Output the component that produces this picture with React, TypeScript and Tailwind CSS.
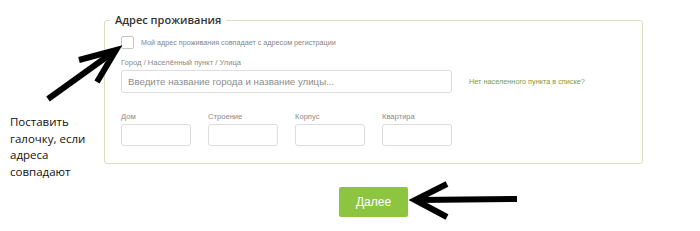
import React from 'react'

const SANS = { fontFamily: '"Liberation Sans", Arial, sans-serif' }

function Field({ label, className }: { label: string; className: string }) {
  return (
    <div className={className}>
      <div className="text-[7.6px] leading-[10px] text-[#8a8a8a]">{label}</div>
      <input type="text" className="mt-[2px] h-[22px] w-full rounded-[3px] border border-[#dddddd] bg-white outline-none" />
    </div>
  )
}

export default function App() {
  return (
    <div className="relative flex h-[231px] w-[700px] overflow-hidden bg-white" style={SANS}>
      {/* Annotation */}
      <div
        className="w-[104px] shrink-0 pl-[10px] pt-[114px] text-[11.5px] leading-[16.7px] text-[#111]"
        style={{ fontFamily: '"Open Sans", "Noto Sans", sans-serif' }}
      >
        Поставить
        <br />
        галочку, если
        <br />
        адреса
        <br />
        совпадают
      </div>

      {/* Form */}
      <div className="flex w-[539px] shrink-0 flex-col items-center pt-[11px]">
        <fieldset className="w-full rounded-[3px] border border-[#dcdfbf] px-[16px] pb-[16px]">
          <legend
            className="ml-[-11px] px-[5px] text-[11px] leading-[18px] font-semibold text-[#333]"
            style={{ fontFamily: '"Open Sans", "Noto Sans", sans-serif' }}
          >
            Адрес проживания
          </legend>

          <label className="mt-[7px] flex items-center gap-[7px]">
            <input
              type="checkbox"
              className="h-[13px] w-[13px] appearance-none rounded-[2px] border border-[#c4c4c4] bg-white"
            />
            <span className="text-[7.2px] leading-[13px] text-[#858585]">
              Мой адрес проживания совпадает с адресом регистрации
            </span>
          </label>

          <div className="mt-[9px] text-[7.6px] leading-[10px] text-[#8a8a8a]">Город / Населённый пункт / Улица</div>
          <div className="mt-[2px] flex items-center">
            <input
              type="text"
              placeholder="Введите название города и название улицы..."
              className="h-[23px] w-[331px] rounded-[3px] border border-[#dddddd] bg-white px-[6px] text-[9.7px] text-[#555] outline-none placeholder:text-[#8c8c8c]"
            />
            <a className="ml-[17px] mt-[2px] text-[7.3px] text-[#7d9b4b]">Нет населенного пункта в списке?</a>
          </div>

          <div className="mt-[19px] flex gap-[17px]">
            <Field label="Дом" className="w-[70px]" />
            <Field label="Строение" className="w-[70px]" />
            <Field label="Корпус" className="w-[70px]" />
            <Field label="Квартира" className="w-[70px]" />
          </div>
        </fieldset>

        <button className="mt-[23px] h-[30px] w-[69px] rounded-[2px] bg-[#8dc440] text-[12px] text-white">Далее</button>
      </div>

      {/* Arrows */}
      <svg className="pointer-events-none absolute left-0 top-0" width="700" height="231" viewBox="0 0 700 231">
        <g fill="none" stroke="#000" strokeWidth="6" strokeLinejoin="miter">
          <path d="M48 99 L112 53" />
          <path d="M79 60 L116 50 L97 82" />
          <path d="M517 199 L418 200" />
          <path d="M447 184 L415 200 L447 217" />
        </g>
      </svg>
    </div>
  )
}
